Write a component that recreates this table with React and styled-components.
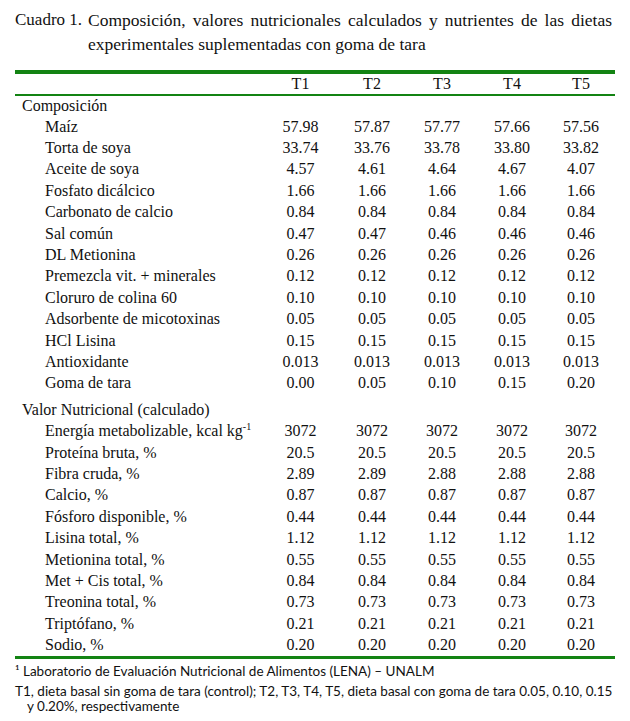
import styled, { createGlobalStyle } from 'styled-components';

const GlobalStyle = createGlobalStyle`
  body {
    margin: 0;
    background: #ffffff;
  }
`;

const GREEN = '#138313';

const Page = styled.div`
  width: 630px;
  padding: 8px 15px 0 15px;
  box-sizing: border-box;
  font-family: "Liberation Serif", "Times New Roman", serif;
  color: #111;
`;

const Caption = styled.div`
  display: flex;
  font-size: 17px;
  line-height: 24px;
`;

const CaptionLabel = styled.div`
  flex: 0 0 73px;
  white-space: nowrap;
`;

const CaptionText = styled.div`
  flex: 1;
  font-size: 17.5px;
  text-align: justify;
  padding-right: 3px;
`;

const Table = styled.div`
  margin-top: 14px;
  width: 600px;
  border-top: 4px solid ${GREEN};
  border-bottom: 3px solid ${GREEN};
  font-family: "Liberation Serif", "Times New Roman", serif;
  font-size: 16px;
`;

const Row = styled.div`
  display: grid;
  grid-template-columns: 249px 73px 70px 70px 70px 68px;
  height: ${p => p.$height || 21.4}px;
  align-items: center;
  margin-top: ${p => p.$gap || 0}px;
  border-bottom: ${p => (p.$ruled ? `2px solid ${GREEN}` : 'none')};
`;

const Label = styled.div`
  padding-left: ${p => (p.$indent ? 30 : 7)}px;
  white-space: nowrap;
`;

const Cell = styled.div`
  text-align: center;
  white-space: nowrap;
`;

const Sup = styled.sup`
  font-size: 10px;
  vertical-align: 6px;
  line-height: 0;
`;

const Notes = styled.div`
  font-family: Lato, "Liberation Sans", sans-serif;
  font-size: 13.5px;
  color: #111;
  margin-top: 4px;
`;

const Note = styled.p`
  margin: 0 0 ${p => p.$after || 0}px 0;
  line-height: ${p => p.$lh || 17}px;
  padding-left: 12px;
  text-indent: -12px;
  white-space: nowrap;
`;

const composition = [
  ['Maíz', ['57.98', '57.87', '57.77', '57.66', '57.56']],
  ['Torta de soya', ['33.74', '33.76', '33.78', '33.80', '33.82']],
  ['Aceite de soya', ['4.57', '4.61', '4.64', '4.67', '4.07']],
  ['Fosfato dicálcico', ['1.66', '1.66', '1.66', '1.66', '1.66']],
  ['Carbonato de calcio', ['0.84', '0.84', '0.84', '0.84', '0.84']],
  ['Sal común', ['0.47', '0.47', '0.46', '0.46', '0.46']],
  ['DL Metionina', ['0.26', '0.26', '0.26', '0.26', '0.26']],
  ['Premezcla vit. + minerales', ['0.12', '0.12', '0.12', '0.12', '0.12']],
  ['Cloruro de colina 60', ['0.10', '0.10', '0.10', '0.10', '0.10']],
  ['Adsorbente de micotoxinas', ['0.05', '0.05', '0.05', '0.05', '0.05']],
  ['HCl Lisina', ['0.15', '0.15', '0.15', '0.15', '0.15']],
  ['Antioxidante', ['0.013', '0.013', '0.013', '0.013', '0.013']],
  ['Goma de tara', ['0.00', '0.05', '0.10', '0.15', '0.20']]
];

const nutrition = [
  [<>Energía metabolizable, kcal kg<Sup>-1</Sup></>, ['3072', '3072', '3072', '3072', '3072'], 'energia'],
  ['Proteína bruta, %', ['20.5', '20.5', '20.5', '20.5', '20.5']],
  ['Fibra cruda, %', ['2.89', '2.89', '2.88', '2.88', '2.88']],
  ['Calcio, %', ['0.87', '0.87', '0.87', '0.87', '0.87']],
  ['Fósforo disponible, %', ['0.44', '0.44', '0.44', '0.44', '0.44']],
  ['Lisina total, %', ['1.12', '1.12', '1.12', '1.12', '1.12']],
  ['Metionina total, %', ['0.55', '0.55', '0.55', '0.55', '0.55']],
  ['Met + Cis total, %', ['0.84', '0.84', '0.84', '0.84', '0.84']],
  ['Treonina total, %', ['0.73', '0.73', '0.73', '0.73', '0.73']],
  ['Triptófano, %', ['0.21', '0.21', '0.21', '0.21', '0.21']],
  ['Sodio, %', ['0.20', '0.20', '0.20', '0.20', '0.20']]
];

const DataRow = ({ label, values }) => (
  <Row>
    <Label $indent>{label}</Label>
    {values.map((v, i) => (
      <Cell key={i}>{v}</Cell>
    ))}
  </Row>
);

const App = () => {
  return (
    <>
      <GlobalStyle />
      <Page>
        <Caption>
          <CaptionLabel>Cuadro 1.</CaptionLabel>
          <CaptionText>
            Composición, valores nutricionales calculados y nutrientes de las dietas
            experimentales suplementadas con goma de tara
          </CaptionText>
        </Caption>

        <Table>
          <Row $height={20} $ruled>
            <Label />
            {['T1', 'T2', 'T3', 'T4', 'T5'].map(t => (
              <Cell key={t}>{t}</Cell>
            ))}
          </Row>

          <Row $height={20}>
            <Label>Composición</Label>
          </Row>
          {composition.map(([label, values]) => (
            <DataRow key={label} label={label} values={values} />
          ))}

          <Row $gap={5}>
            <Label>Valor Nutricional (calculado)</Label>
          </Row>
          {nutrition.map(([label, values, key]) => (
            <DataRow key={key || label} label={label} values={values} />
          ))}
        </Table>

        <Notes>
          <Note $after={4}>¹ Laboratorio de Evaluación Nutricional de Alimentos (LENA) – UNALM</Note>
          <Note $lh={15}>
            T1, dieta basal sin goma de tara (control); T2, T3, T4, T5, dieta basal con goma de tara 0.05, 0.10, 0.15
            <br />
            y 0.20%, respectivamente
          </Note>
        </Notes>
      </Page>
    </>
  );
};

export default App;
